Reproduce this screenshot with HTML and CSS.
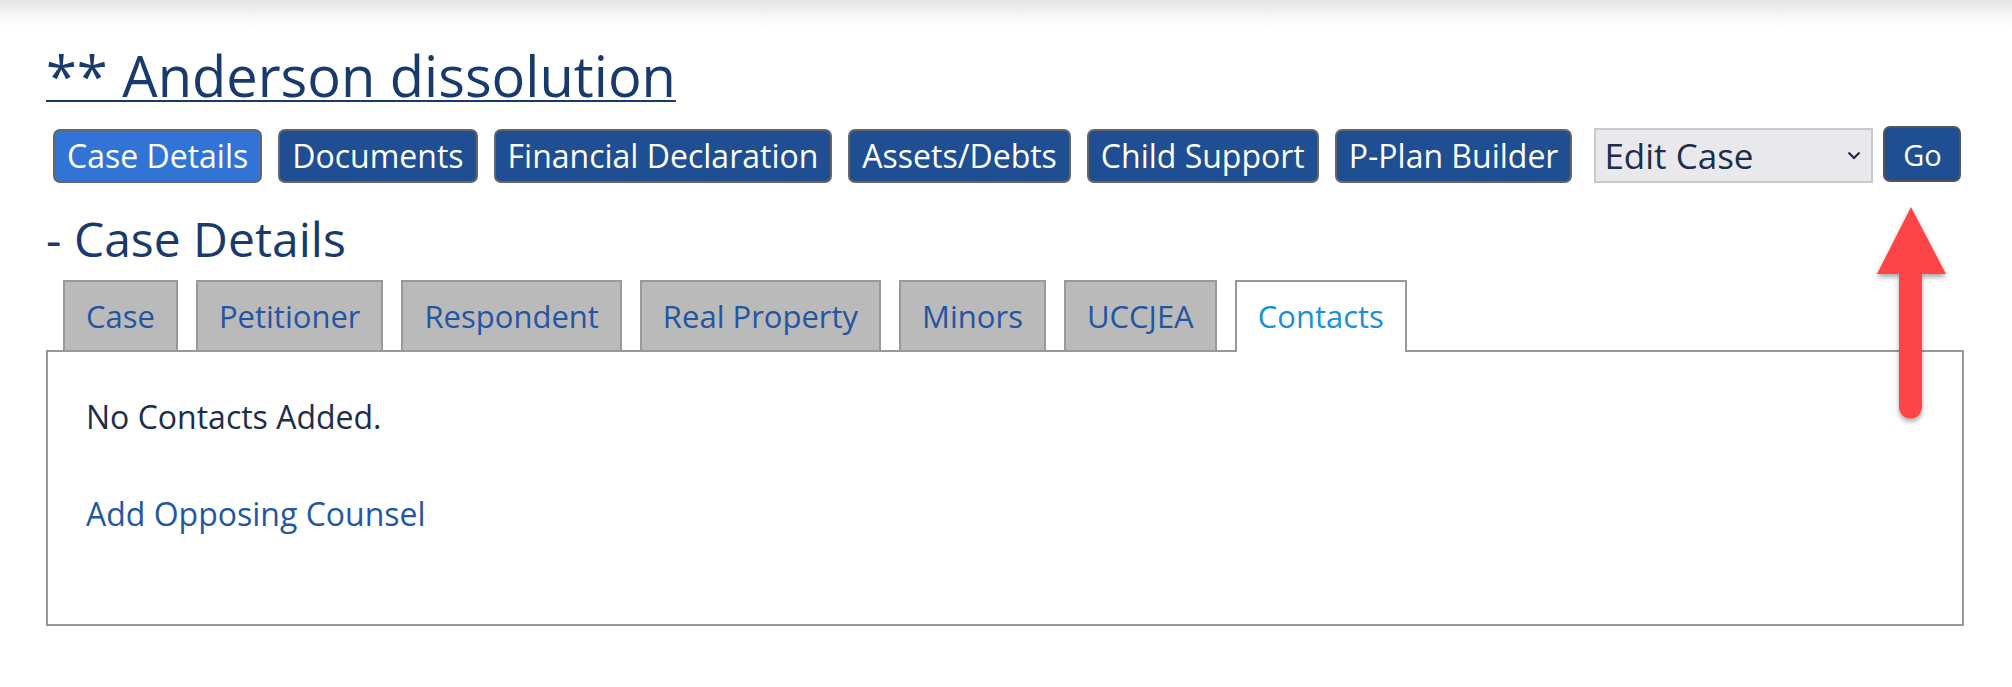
FILE: index.html
```html
<!DOCTYPE html>
<html lang="en">
<head>
<meta charset="utf-8">
<title>Anderson dissolution</title>
<link rel="stylesheet" href="styles.css">
</head>
<body>
<div class="topbar"></div>
<main class="page">
  <h1 class="case-title"><a href="#">** Anderson dissolution</a></h1>
  <nav class="actions">
    <a class="btn btn-active" href="#">Case Details</a>
    <a class="btn" href="#">Documents</a>
    <a class="btn" href="#">Financial Declaration</a>
    <a class="btn" href="#">Assets/Debts</a>
    <a class="btn" href="#">Child Support</a>
    <a class="btn" href="#">P-Plan Builder</a>
    <div class="select-wrap">
      <select class="case-select">
        <option>Edit Case</option>
      </select>
      <svg class="chevron" width="14" height="9" viewBox="0 0 14 9"><path d="M1.5 1.5 L7 7 L12.5 1.5" fill="none" stroke="#1c2e4a" stroke-width="2.2"/></svg>
    </div>
    <button class="go-btn">Go</button>
  </nav>
  <h2 class="section-title">- Case Details</h2>
  <div class="tabs">
    <a class="tab" href="#">Case</a>
    <a class="tab" href="#">Petitioner</a>
    <a class="tab" href="#">Respondent</a>
    <a class="tab" href="#">Real Property</a>
    <a class="tab" href="#">Minors</a>
    <a class="tab" href="#">UCCJEA</a>
    <a class="tab tab-active" href="#">Contacts</a>
  </div>
  <section class="panel">
    <p class="empty">No Contacts Added.</p>
    <p><a class="link" href="#">Add Opposing Counsel</a></p>
  </section>
  <svg class="arrow" width="100" height="240" viewBox="0 0 100 240">
    <defs>
      <filter id="sh" x="-30%" y="-10%" width="160%" height="130%">
        <feDropShadow dx="0" dy="3" stdDeviation="2.5" flood-color="#000" flood-opacity="0.35"/>
      </filter>
    </defs>
    <g filter="url(#sh)" fill="#fd4447">
      <path d="M51 12 L86 79 L62 79 L62 212 A11.5 11.5 0 0 1 39 212 L39 79 L17 79 Z"/>
    </g>
  </svg>
</main>
</body>
</html>
```
FILE: styles.css
```css
* { box-sizing: border-box; }
html, body {
  margin: 0;
  padding: 0;
  background: #fff;
}
body {
  font-family: "Open Sans", "Noto Sans", sans-serif;
  color: #1c2e4a;
}
.topbar {
  height: 28px;
  background: linear-gradient(#e4e4e4, #fafafa 70%, #fff);
}
.page {
  position: relative;
  padding: 8px 48px 0 46px;
}
.case-title {
  margin: 0;
  font-size: 56px;
  font-weight: 400;
  line-height: 79px;
}
.case-title a {
  color: #183a6c;
  text-decoration: underline;
  text-decoration-thickness: 2px;
  text-underline-offset: 3px;
}
.actions {
  display: flex;
  align-items: flex-start;
  margin-top: 13px;
  padding-left: 7px;
  gap: 16px;
}
.btn {
  display: block;
  flex-shrink: 0;
  margin-top: 1px;
  font-size: 32px;
  line-height: 44px;
  padding: 3px 12px;
  color: #fff;
  text-decoration: none;
  background: #1f4e93;
  border: 2px solid #666;
  border-radius: 7px;
  white-space: nowrap;
}
.btn-active {
  background: #3274d6;
}
.select-wrap {
  position: relative;
  flex-shrink: 0;
  margin-left: 6px;
}
.case-select {
  display: block;
  appearance: none;
  -webkit-appearance: none;
  width: 279px;
  height: 55px;
  margin: 0;
  padding: 0 40px 0 8px;
  font: 400 35px/1.2 "Open Sans", sans-serif;
  color: #1c2e4a;
  background: #e9e9ed;
  border: 2px solid #c9c9cc;
  border-radius: 0;
}
.chevron {
  position: absolute;
  right: 12px;
  top: 23px;
  pointer-events: none;
}
.go-btn {
  flex-shrink: 0;
  margin: -2px 0 0 -6px;
  width: 78px;
  height: 56px;
  padding: 0;
  font: 400 29px/1 "Open Sans", sans-serif;
  color: #fff;
  background: #1f4e93;
  border: 2px solid #555;
  border-radius: 7px;
}
.section-title {
  margin: 25px 0 0;
  font-size: 48px;
  font-weight: 400;
  line-height: 62px;
  color: #183a6c;
}
.tabs {
  display: flex;
  align-items: flex-end;
  gap: 18px;
  margin-top: 10px;
  padding-left: 17px;
}
.tab {
  display: block;
  font-size: 31px;
  line-height: 42px;
  padding: 13px 21px 13px;
  color: #2355a3;
  text-decoration: none;
  background: #bababa;
  border: 2px solid #999;
  border-bottom: 0;
}
.tab-active {
  background: #fff;
  color: #1a90d6;
  margin-bottom: -2px;
  padding-bottom: 15px;
  position: relative;
}
.panel {
  border: 2px solid #999;
  height: 276px;
  padding: 43px 38px 0;
}
.panel p {
  margin: 0 0 53px;
  font-size: 32px;
  line-height: 44px;
}
.empty {
  color: #1c2e4a;
}
.link {
  color: #2356a6;
  text-decoration: none;
}
.arrow {
  position: absolute;
  left: 1860px;
  top: 167px;
}
```
